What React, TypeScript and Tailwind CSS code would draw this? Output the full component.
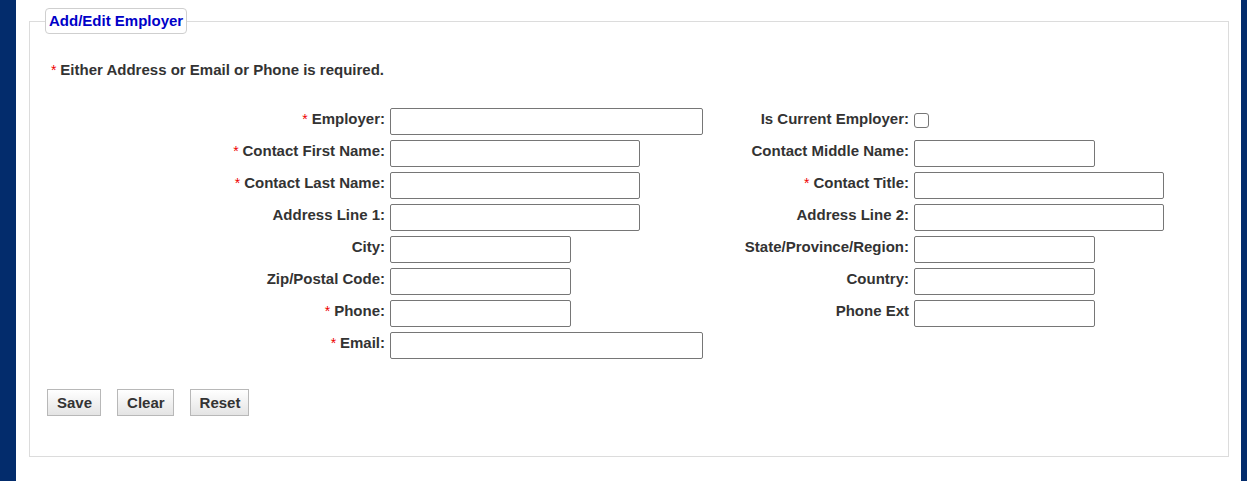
import React from 'react'

type Field = {
  label: string
  required?: boolean
  width?: number
  checkbox?: boolean
}

const rows: [Field, Field | null][] = [
  [{ label: 'Employer:', required: true, width: 313 }, { label: 'Is Current Employer:', checkbox: true }],
  [{ label: 'Contact First Name:', required: true, width: 250 }, { label: 'Contact Middle Name:', width: 181 }],
  [{ label: 'Contact Last Name:', required: true, width: 250 }, { label: 'Contact Title:', required: true, width: 250 }],
  [{ label: 'Address Line 1:', width: 250 }, { label: 'Address Line 2:', width: 250 }],
  [{ label: 'City:', width: 181 }, { label: 'State/Province/Region:', width: 181 }],
  [{ label: 'Zip/Postal Code:', width: 181 }, { label: 'Country:', width: 181 }],
  [{ label: 'Phone:', required: true, width: 181 }, { label: 'Phone Ext', width: 181 }],
  [{ label: 'Email:', required: true, width: 313 }, null],
]

function Label({ field }: { field: Field }) {
  return (
    <div className="text-right pt-[3px] leading-4 whitespace-nowrap">
      {field.required && <span className="text-[#e00] font-normal text-[14px]">* </span>}
      {field.label}
    </div>
  )
}

function Control({ field }: { field: Field }) {
  if (field.checkbox) {
    return (
      <div className="h-[27px]">
        <input
          type="checkbox"
          className="appearance-none block w-[15px] h-[15px] mt-[5px] border border-[#767676] rounded-[3px] bg-white"
        />
      </div>
    )
  }
  return (
    <div>
      <input
        type="text"
        className="block h-[27px] border border-[#767676] rounded-[2px] bg-white outline-none"
        style={{ width: field.width }}
      />
    </div>
  )
}

function Button({ children }: { children: React.ReactNode }) {
  return (
    <button className="h-[27px] pl-[9px] pr-[8px] border border-[#b8b8b8] bg-gradient-to-b from-white to-[#e4e4e4] text-[15px] font-bold text-[#333] leading-4">
      {children}
    </button>
  )
}

export default function App() {
  return (
    <div className="flex h-[481px] bg-white font-['Liberation_Sans',Arial,sans-serif] text-[15px] text-[#333]">
      <div className="w-4 bg-[#032c6c]" />
      <div className="flex-1 pt-2 pl-[13px] pr-[12px]">
        <fieldset className="border border-[#dcdcdc] pl-[15px] pr-4 pb-10">
          <legend className="border border-[#cfcfcf] rounded-[4px] px-[3px] py-[4px] leading-4 font-bold text-[#0000c8]">
            Add/Edit Employer
          </legend>

          <p className="mt-[28px] ml-[6px] leading-4 font-bold">
            <span className="text-[#e00] font-normal text-[14px]">* </span>
            Either Address or Email or Phone is required.
          </p>

          {/* Employer fields */}
          <div className="mt-[30px] ml-[5px] grid grid-cols-[335px_320px_194px_1fr] gap-x-[5px] gap-y-[5px] font-bold">
            {rows.map(([left, right], i) => (
              <React.Fragment key={i}>
                <Label field={left} />
                <Control field={left} />
                {right ? <Label field={right} /> : <div />}
                {right ? <Control field={right} /> : <div />}
              </React.Fragment>
            ))}
          </div>

          <div className="mt-[30px] ml-[2px] flex gap-4">
            <Button>Save</Button>
            <Button>Clear</Button>
            <Button>Reset</Button>
          </div>
        </fieldset>
      </div>
      <div className="w-[6px] bg-[#032c6c]" />
    </div>
  )
}
